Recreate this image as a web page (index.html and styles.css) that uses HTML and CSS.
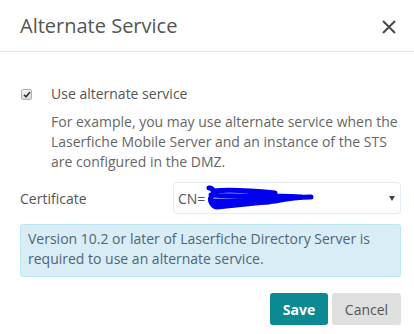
FILE: index.html
```html
<!DOCTYPE html>
<html>
<head>
<meta charset="utf-8">
<link rel="stylesheet" href="styles.css">
</head>
<body>
<div class="modal">
  <div class="header">
    <h1 class="title">Alternate Service</h1>
    <button class="close" aria-label="Close">
      <svg width="14" height="14" viewBox="0 0 14 14"><path d="M1 1L13 13M13 1L1 13" stroke="#4a4a4a" stroke-width="2" fill="none"/></svg>
    </button>
  </div>
  <div class="body">
    <div class="check-row">
      <span class="checkbox">
        <svg width="8" height="7" viewBox="0 0 8 7"><path d="M1 3.8L3 5.8L7 1" stroke="#333" stroke-width="1.6" fill="none"/></svg>
      </span>
      <div class="check-text">
        <div class="check-label">Use alternate service</div>
        <p class="help">For example, you may use alternate service when the Laserfiche Mobile Server and an instance of the STS are configured in the DMZ.</p>
      </div>
    </div>
    <div class="field">
      <label class="field-label">Certificate</label>
      <div class="select">
        <span class="select-value">CN=<span class="scribble"><svg width="110" height="26" viewBox="0 0 110 26"><path d="M4 3 C8 2 10 8 6 12 C4 16 8 22 12 22 C30 20 50 18 70 16 C80 14 90 12 106 12 M8 6 C30 4 50 6 70 8 M6 10 C40 12 60 10 96 12 M6 16 C40 16 60 16 80 14 M10 20 C30 19 50 18 64 17" stroke="#0000ee" stroke-width="5" fill="none" stroke-linecap="round"/></svg></span></span>
        <span class="caret"></span>
      </div>
    </div>
    <div class="info">Version 10.2 or later of Laserfiche Directory Server is required to use an alternate service.</div>
  </div>
  <div class="footer">
    <button class="btn btn-save">Save</button>
    <button class="btn btn-cancel">Cancel</button>
  </div>
</div>
</body>
</html>
```
FILE: styles.css
```css
html, body {
  margin: 0;
  padding: 0;
  background: #fff;
}
body {
  font-family: "Open Sans", "Liberation Sans", sans-serif;
  color: #555;
  width: 414px;
  height: 334px;
  overflow: hidden;
}
.modal {
  width: 414px;
}
.header {
  display: flex;
  align-items: flex-start;
  justify-content: space-between;
  height: 51px;
  box-sizing: content-box;
  padding: 0 18px 0 20px;
  border-bottom: 1px solid #e5e5e5;
}
.title {
  margin: 12px 0 0;
  font-size: 20px;
  font-weight: 400;
  color: #555;
  line-height: 28px;
}
.close {
  border: 0;
  background: none;
  padding: 0;
  width: 14px;
  height: 14px;
  display: flex;
  margin-top: 20px;
}
.body {
  padding: 32px 13px 0 20px;
}
.check-row {
  display: flex;
  gap: 19px;
}
.checkbox {
  width: 11px;
  height: 11px;
  margin: 5px 0 0 1px;
  box-sizing: border-box;
  border: 1px solid #b0b0b0;
  border-radius: 2px;
  background: linear-gradient(#f4f4f4, #dcdcdc);
  display: flex;
  align-items: center;
  justify-content: center;
  flex: none;
}
.check-text {
  font-size: 14px;
  line-height: 20px;
}
.check-label {
  color: #555;
}
.help {
  margin: 8px 0 0;
  color: #666;
}
.field {
  display: flex;
  align-items: center;
  margin-top: 10px;
}
.field-label {
  width: 153px;
  font-size: 14px;
  line-height: 19px;
  color: #555;
}
.select {
  flex: 1;
  height: 32px;
  box-sizing: border-box;
  border: 1px solid #e3edf3;
  border-radius: 4px;
  display: flex;
  align-items: center;
  justify-content: space-between;
  padding: 0 5px 0 4px;
  font-size: 14px;
  color: #555;
}
.select-value {
  display: flex;
  align-items: center;
}
.scribble {
  display: flex;
}
.caret {
  width: 0;
  height: 0;
  border-left: 3.5px solid transparent;
  border-right: 3.5px solid transparent;
  border-top: 5px solid #444;
}
.info {
  margin-top: 10px;
  background: #d9edf7;
  border: 1px solid #bce8f1;
  border-radius: 3px;
  padding: 4px 10px 7px 7px;
  font-size: 14px;
  line-height: 20px;
  color: #4f6575;
}
.footer {
  display: flex;
  justify-content: flex-end;
  gap: 4px;
  padding: 16px 13px 0 0;
}
.btn {
  height: 32px;
  border: 0;
  border-radius: 3px;
  font-family: "Open Sans", "Liberation Sans", sans-serif;
  font-size: 14px;
  padding: 0;
}
.btn-save {
  background: #0b8a93;
  color: #fff;
  font-weight: 700;
  width: 58px;
}
.btn-cancel {
  background: #e0e0e0;
  color: #555;
  width: 69px;
}
```
